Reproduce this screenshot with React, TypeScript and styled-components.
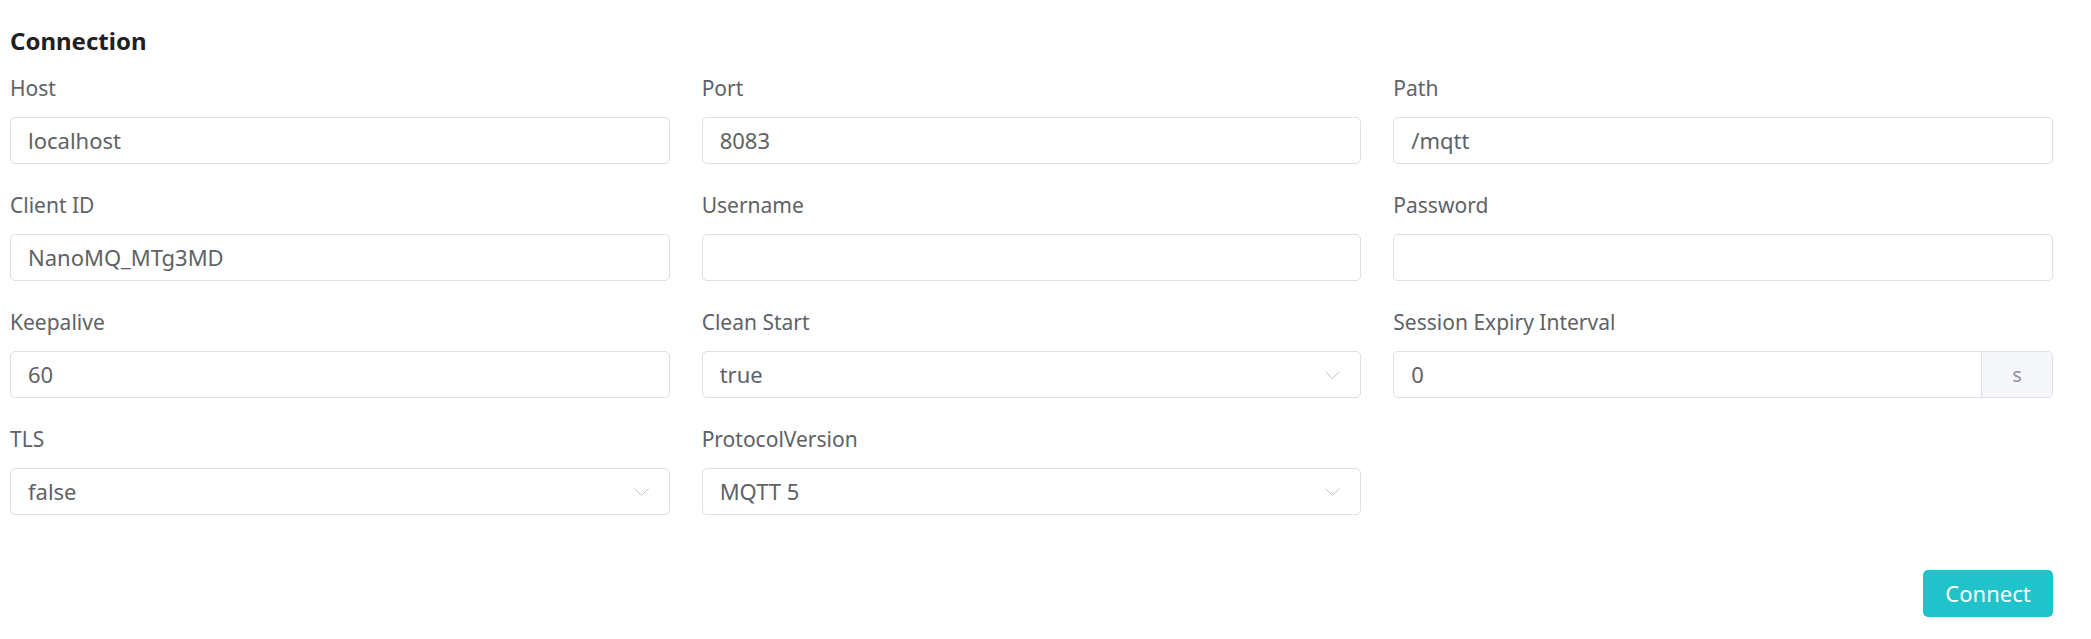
import React from 'react';
import styled, { createGlobalStyle } from 'styled-components';

const Global = createGlobalStyle`
  html, body { margin: 0; padding: 0; background: #ffffff; }
  body { font-family: "Noto Sans", "Open Sans", sans-serif; }
`;

const Page = styled.div`
  padding: 27px 38px 0 10px;
`;

const Title = styled.h2`
  margin: 0 0 21px;
  font-size: 24px;
  line-height: 28px;
  font-weight: 700;
  color: #1f2024;
`;

const Grid = styled.div`
  display: grid;
  grid-template-columns: repeat(3, 1fr);
  column-gap: 32px;
  row-gap: 29px;
`;

const Field = styled.div`
  display: flex;
  flex-direction: column;
  min-width: 0;
`;

const Label = styled.label`
  font-size: 21px;
  line-height: 24px;
  color: #606266;
  margin-bottom: 17px;
  white-space: nowrap;
`;

const Box = styled.div`
  height: 47px;
  box-sizing: border-box;
  border: 1px solid #dcdfe6;
  border-radius: 5px;
  display: flex;
  align-items: center;
  background: #ffffff;
  overflow: hidden;
  font-size: 22px;
  color: #606266;
`;

const Value = styled.span`
  flex: 1;
  padding: 0 0 2px 17px;
  white-space: nowrap;
`;

const Chevron = styled.svg`
  width: 15px;
  height: 8px;
  margin-right: 20px;
  flex: none;
`;

const Append = styled.div`
  width: 70px;
  height: 100%;
  flex: none;
  border-left: 1px solid #dcdfe6;
  background: #f5f7fa;
  color: #909399;
  display: flex;
  align-items: center;
  justify-content: center;
  font-size: 20px;
`;

const Footer = styled.div`
  display: flex;
  justify-content: flex-end;
  margin-top: 55px;
`;

const Button = styled.button`
  width: 130px;
  height: 47px;
  border: none;
  border-radius: 5px;
  background: #20c3c9;
  color: #ffffff;
  font-family: inherit;
  font-size: 22px;
  padding: 0 0 2px;
  cursor: pointer;
`;

const Arrow = () => (
  <Chevron viewBox="0 0 15 8">
    <polyline points="0.5,0.5 7.5,7.5 14.5,0.5" fill="none" stroke="#c0c4cc" strokeWidth="1" />
  </Chevron>
);

type F = { label: string; value?: string; select?: boolean; append?: string };

const fields: F[] = [
  { label: 'Host', value: 'localhost' },
  { label: 'Port', value: '8083' },
  { label: 'Path', value: '/mqtt' },
  { label: 'Client ID', value: 'NanoMQ_MTg3MD' },
  { label: 'Username', value: '' },
  { label: 'Password', value: '' },
  { label: 'Keepalive', value: '60' },
  { label: 'Clean Start', value: 'true', select: true },
  { label: 'Session Expiry Interval', value: '0', append: 's' },
  { label: 'TLS', value: 'false', select: true },
  { label: 'ProtocolVersion', value: 'MQTT 5', select: true },
];

export default function App() {
  return (
    <Page>
      <Global />
      <Title>Connection</Title>
      <Grid>
        {fields.map((f) => (
          <Field key={f.label}>
            <Label>{f.label}</Label>
            <Box>
              <Value>{f.value}</Value>
              {f.select && <Arrow />}
              {f.append && <Append>{f.append}</Append>}
            </Box>
          </Field>
        ))}
      </Grid>
      <Footer>
        <Button>Connect</Button>
      </Footer>
    </Page>
  );
}
